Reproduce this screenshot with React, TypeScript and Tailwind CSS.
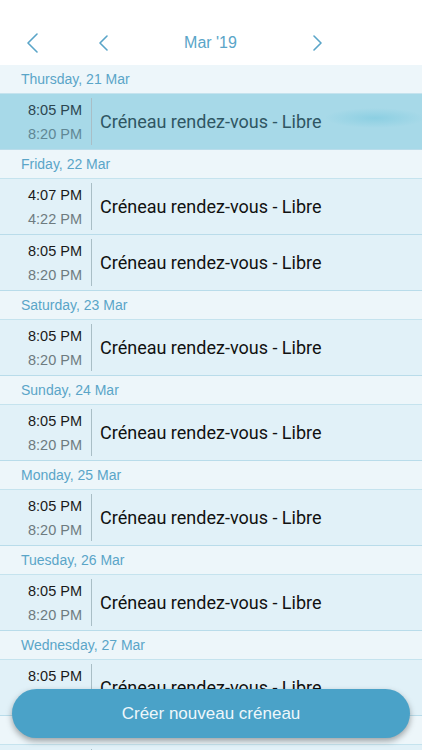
import React from "react";

type Slot = { start: string; end: string };
type Day = { label: string; slots: Slot[]; selected?: boolean };

const days: Day[] = [
  { label: "Thursday, 21 Mar", slots: [{ start: "8:05 PM", end: "8:20 PM" }], selected: true },
  { label: "Friday, 22 Mar", slots: [{ start: "4:07 PM", end: "4:22 PM" }, { start: "8:05 PM", end: "8:20 PM" }] },
  { label: "Saturday, 23 Mar", slots: [{ start: "8:05 PM", end: "8:20 PM" }] },
  { label: "Sunday, 24 Mar", slots: [{ start: "8:05 PM", end: "8:20 PM" }] },
  { label: "Monday, 25 Mar", slots: [{ start: "8:05 PM", end: "8:20 PM" }] },
  { label: "Tuesday, 26 Mar", slots: [{ start: "8:05 PM", end: "8:20 PM" }] },
  { label: "Wednesday, 27 Mar", slots: [{ start: "8:05 PM", end: "8:20 PM" }] },
  { label: "Thursday, 28 Mar", slots: [{ start: "8:05 PM", end: "8:20 PM" }] },
];

function Chevron({ dir, w, h }: { dir: "left" | "right"; w: number; h: number }) {
  const d = dir === "left" ? `M${w - 1} 1 L1 ${h / 2} L${w - 1} ${h - 1}` : `M1 1 L${w - 1} ${h / 2} L1 ${h - 1}`;
  return (
    <svg width={w} height={h} viewBox={`0 0 ${w} ${h}`} fill="none" className="shrink-0">
      <path d={d} stroke="#5aa5c8" strokeWidth="1.6" strokeLinecap="round" strokeLinejoin="round" />
    </svg>
  );
}

export default function App() {
  return (
    <div className="relative w-[422px] h-[750px] overflow-hidden bg-white" style={{ fontFamily: "'Liberation Sans', Arial, sans-serif" }}>
      <header className="h-[65px] bg-white flex items-center pt-[20px] pl-[27px]">
        <Chevron dir="left" w={11} h={20} />
        <div className="w-[61px]" />
        <Chevron dir="left" w={9} h={16} />
        <div className="w-[205px] text-center text-[16px] text-[#5aa5c8] leading-[20px]">Mar '19</div>
        <Chevron dir="right" w={9} h={16} />
      </header>
      <main>
        {days.map((day, i) => (
          <section key={i}>
            <div className="h-[29px] bg-[#edf6fa] flex items-center pl-[21px] text-[14px] text-[#5aa5c8] border-b border-[#c5e3ee]">
              {day.label}
            </div>
            {day.slots.map((s, j) => (
              <div
                key={j}
                className={`h-[56px] flex items-stretch border-b border-[#b9dcea] ${
                  day.selected
                    ? "bg-[radial-gradient(ellipse_50px_10px_at_375px_24px,#8ccfe2,transparent),linear-gradient(#a7d9e8,#a7d9e8)]"
                    : "bg-[#e1f1f8]"
                }`}
              >
                <div className="w-[91px] flex flex-col justify-center items-end pr-[9px] py-[4px]">
                  <div className={`text-[14.5px] leading-[24px] ${day.selected ? "text-[#2c4650]" : "text-[#1a1a1a]"}`}>{s.start}</div>
                  <div className={`text-[14.5px] leading-[24px] ${day.selected ? "text-[#5f8795]" : "text-[#6e7b80]"}`}>{s.end}</div>
                </div>
                <div className="my-[4px] w-px bg-[#a9bec6]" />
                <div
                  className={`flex items-center pl-[8px] text-[18px] font-['Roboto',sans-serif] ${day.selected ? "text-[#2f5663]" : "text-[#111]"}`}
                >
                  Créneau rendez-vous - Libre
                </div>
              </div>
            ))}
          </section>
        ))}
      </main>
      <button className="absolute left-[12px] top-[689px] w-[398px] h-[49px] rounded-full bg-[#4aa2c8] text-[#eef7fb] text-[17px] shadow-[0_3px_6px_rgba(0,0,0,0.35)]">
        Créer nouveau créneau
      </button>
    </div>
  );
}
